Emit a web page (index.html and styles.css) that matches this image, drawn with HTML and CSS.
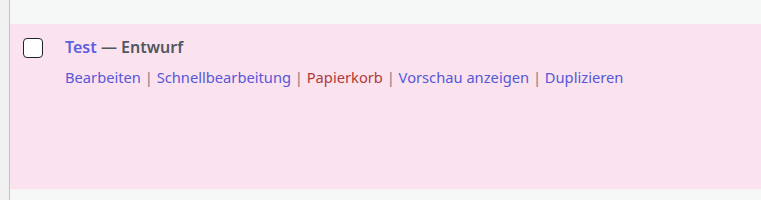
FILE: index.html
```html
<!DOCTYPE html>
<html lang="de">
<head>
  <meta charset="UTF-8">
  <title>Beiträge</title>
  <link rel="stylesheet" href="styles.css">
</head>
<body>
  <div class="wrap">
    <div class="sidebar"></div>
    <div class="content">
      <div class="top-space"></div>
      <div class="row">
        <div class="check"><span class="box"></span></div>
        <div class="cell">
          <div class="title"><a href="#">Test</a> — <span class="state">Entwurf</span></div>
          <div class="actions">
            <a href="#">Bearbeiten</a> | <a href="#">Schnellbearbeitung</a> | <a href="#" class="trash">Papierkorb</a> | <a href="#">Vorschau anzeigen</a> | <a href="#">Duplizieren</a>
          </div>
        </div>
      </div>
    </div>
  </div>
</body>
</html>
```

FILE: styles.css
```css
body {
  margin: 0;
  font-family: "Noto Sans", "Open Sans", sans-serif;
  background: #f6f7f7;
}
a {
  text-decoration: none;
}
.wrap {
  display: flex;
  height: 200px;
}
.sidebar {
  width: 9px;
  background: #f0f0f1;
  border-right: 1px solid #c3c4c7;
}
.content {
  flex: 1;
}
.top-space {
  height: 24px;
}
.row {
  display: flex;
  background: #fbe2ef;
  height: 165px;
  border-bottom: 1px solid #f9eef3;
}
.check {
  width: 55px;
  padding: 14px 0 0 13px;
  box-sizing: border-box;
}
.box {
  display: block;
  width: 18px;
  height: 18px;
  border: 1px solid #1d2327;
  border-radius: 4px;
  background: #fff;
}
.cell {
  padding-top: 10px;
}
.title {
  font-size: 16px;
  font-weight: 600;
  color: #50575e;
  line-height: 26px;
}
.title a {
  color: #5b5fe0;
}
.actions {
  font-size: 14.7px;
  color: #787c82;
  line-height: 20px;
  margin-top: 7px;
}
.actions a {
  color: #5658d8;
}
.actions a.trash {
  color: #b03a3a;
}
```
